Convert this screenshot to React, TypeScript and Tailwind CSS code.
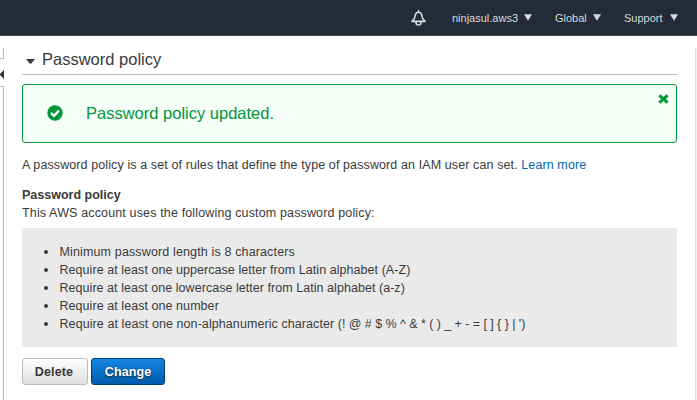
import React from "react";

const rules = [
  { text: "Minimum password length is 8 characters", tracking: "tracking-[0.14px]" },
  { text: "Require at least one uppercase letter from Latin alphabet (A-Z)", tracking: "tracking-[0.055px]" },
  { text: "Require at least one lowercase letter from Latin alphabet (a-z)", tracking: "tracking-[0.045px]" },
  { text: "Require at least one number", tracking: "tracking-[0.06px]" },
  {
    text: "Require at least one non-alphanumeric character ",
    symbols: "(! @ # $ % ^ & * ( ) _ + - = [ ] { } | ')",
    tracking: "tracking-[0.08px]",
  },
];

function MenuItem({ label, className }: { label: string; className: string }) {
  return (
    <div className={`flex items-center justify-between ${className}`}>
      <span className="whitespace-nowrap">{label}</span>
      <svg width="8" height="7" viewBox="0 0 8 7" fill="#d5dbdb" className="-mt-px">
        <path d="M0 0.2H8L4 6.8Z" />
      </svg>
    </div>
  );
}

function Header() {
  return (
    <header className="flex h-9 items-center border-b border-[#414750] bg-[#222b37] pl-[411px] text-[11px] leading-4 text-[#d5dbdb]">
      <svg width="15" height="17" viewBox="0 0 15 17" fill="none" stroke="#d5dbdb" strokeWidth="1.6" className="mt-px" strokeLinejoin="round">
        <path d="M7.5 0.3V2M0.9 11.4H14.1L11.6 8.4L10.5 4.4Q9.8 2.2 7.5 2.2T4.5 4.4L3.4 8.4Z" />
        <path d="M5.1 11.5V13Q5.1 15 7.5 15T9.9 13V11.5" />
      </svg>
      <MenuItem label="ninjasul.aws3" className="ml-[26px] w-[80px]" />
      <MenuItem label="Global" className="ml-[23px] w-[46px]" />
      <MenuItem label="Support" className="ml-[23px] w-[54px]" />
    </header>
  );
}

function SideRail() {
  return (
    <aside className="flex w-[22px] shrink-0 flex-col items-start">
      <div className="mt-3 h-[11px] w-1 border-r border-b border-[#bbb]" />
      <svg className="mt-[11px]" width="4" height="9" viewBox="0 0 4 9" fill="#333">
        <path d="M4 0V9L0 5V4Z" />
      </svg>
      <div className="mt-[7px] w-1 flex-1 border-t border-r border-[#bbb]" />
    </aside>
  );
}

export default function App() {
  return (
    <div className="flex h-[400px] w-[697px] flex-col overflow-hidden bg-white font-['Liberation_Sans',Arial,sans-serif] text-[12.5px] leading-[18px] text-[#3a3a3a]">
      <Header />
      <div className="flex min-h-0 flex-1">
        <SideRail />
        <main className="w-[655px] shrink-0">
          <div className="flex h-[39px] items-center border-b border-[#bbb] pt-[9px] pl-1">
            <svg width="9" height="5" viewBox="0 0 9 5" fill="#3a3a3a" className="mt-[3px]">
              <path d="M0 0H9L5 4.7H4Z" />
            </svg>
            <h1 className="-mt-0.5 ml-[7px] text-[16.5px] leading-5">Password policy</h1>
          </div>
          <div className="mt-[9px] flex h-[59px] rounded-[3px] border border-[#009639] bg-[#f6fef8] text-[#009639]">
            <svg width="16" height="16" viewBox="0 0 16 16" className="mt-5 ml-6">
              <circle cx="8" cy="8" r="7.7" fill="#009639" />
              <path d="M4 8L7 10.8L12 5.7" fill="none" stroke="white" strokeWidth="2.4" />
            </svg>
            <span className="mt-[18px] ml-[23px] text-[16.5px] leading-5">Password policy updated.</span>
            <svg width="11" height="10" viewBox="0 0 11 10" className="mt-[9px] mr-[7.5px] ml-auto">
              <path d="M1.4 1.4L9.6 8.6M9.6 1.4L1.4 8.6" stroke="#009639" strokeWidth="3.2" />
            </svg>
          </div>
          <p className="mt-[13px] whitespace-nowrap tracking-[0.105px]">
            A password policy is a set of rules that define the type of password an IAM user can set.{" "}
            <a className="text-[#0066b3]">Learn more</a>
          </p>
          <h2 className="mt-3 font-bold">Password policy</h2>
          <p className="tracking-[0.145px]">This AWS account uses the following custom password policy:</p>
          <ul className="mt-[6px] h-[119px] bg-[#eaeaea] pt-[15px] pl-[22px]">
            {rules.map((rule) => (
              <li key={rule.text} className="flex items-center whitespace-pre">
                <span className="mr-[11.5px] size-1 rounded-full bg-[#3a3a3a]" />
                <span className={rule.tracking}>
                  {rule.text}
                  {rule.symbols && <span className="tracking-[-0.05px]">{rule.symbols}</span>}
                </span>
              </li>
            ))}
          </ul>
          <div className="mt-[11px] flex gap-[3px] font-bold">
            <button className="h-[27px] w-[66px] rounded-[3px] border border-[#bbb] bg-linear-to-b from-white to-[#dedede] pr-0.5 tracking-[0.15px]">Delete</button>
            <button className="h-[27px] w-[74px] rounded-[3px] border border-[#003f78] bg-linear-to-b from-[#1685e3] to-[#005cac] text-white tracking-[0.1px] [text-shadow:0_1px_2px_#222]">Change</button>
          </div>
        </main>
        <div className="mt-3 ml-[18px] w-[2px] border-l border-[#ddd] bg-[#f3f3f3]" />
      </div>
    </div>
  );
}
